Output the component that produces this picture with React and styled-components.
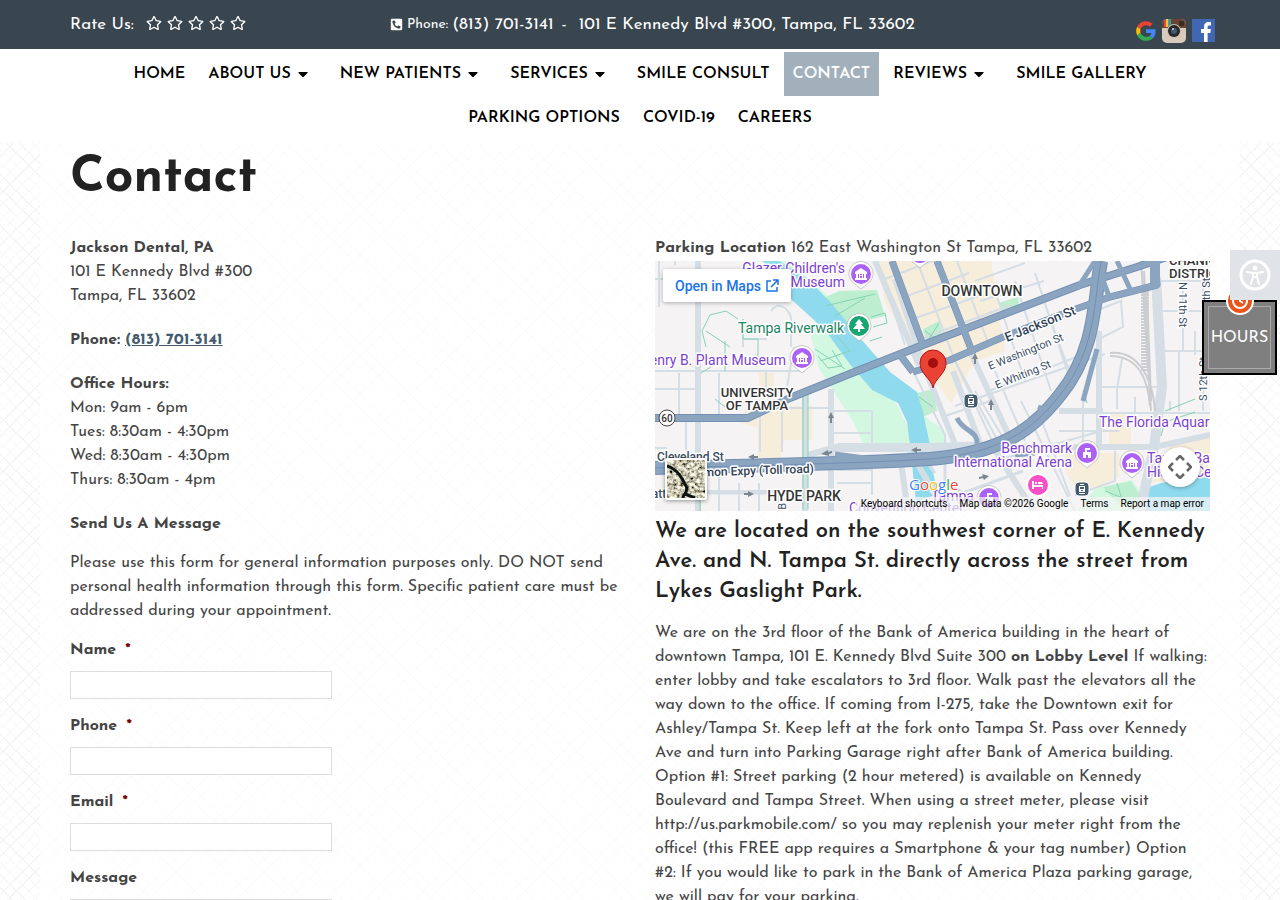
import React from 'react';
import styled, { createGlobalStyle } from 'styled-components';
import { FaRegStar, FaPhoneSquareAlt, FaCaretDown } from 'react-icons/fa';

const GlobalStyle = createGlobalStyle`
  *, *::before, *::after {
    box-sizing: border-box;
  }
  body {
    margin: 0;
    color: #444;
    font-family: 'Josefin Sans', Lato, sans-serif;
    font-size: 16px;
    line-height: 24px;
    background-color: #fff;
    background-image:
      repeating-linear-gradient(45deg, #f5f5f5 0 1px, transparent 1px 9px),
      repeating-linear-gradient(-45deg, #f5f5f5 0 1px, transparent 1px 9px);
  }
  h1, h2, h3, p, ul {
    margin: 0;
    padding: 0;
  }
  a {
    color: inherit;
    text-decoration: none;
  }
`;

const Container = styled.div`
  max-width: 1140px;
  margin: 0 auto;
`;

const TopBar = styled.header`
  background: #394650;
  color: #fff;
`;

const TopRow = styled(Container)`
  display: grid;
  grid-template-columns: 320px 1fr auto;
  align-items: center;
  height: 49px;
  font-size: 17px;
`;

const Rating = styled.div`
  display: flex;
  align-items: center;
  gap: 12px;
`;

const Stars = styled.span`
  display: flex;
  gap: 5px;
  font-size: 16px;
  margin-top: -3px;
`;

const TopContact = styled.div`
  display: flex;
  align-items: center;
  gap: 4px;
  white-space: nowrap;
  small {
    font-size: 14px;
  }
  span {
    padding: 0 8px 0 4px;
  }
`;

const Social = styled.div`
  display: flex;
  align-items: center;
  gap: 6px;
  padding: 12px 0 0;
  margin-right: -5px;
  a {
    display: flex;
  }
`;

const Nav = styled.nav`
  background: #fff;
  padding: 3px 0;
`;

const NavList = styled.ul`
  display: flex;
  flex-wrap: wrap;
  justify-content: center;
  column-gap: 5px;
  max-width: 1140px;
  margin: 0 auto;
  list-style: none;
`;

const NavLink = styled.a`
  display: flex;
  align-items: center;
  gap: 4px;
  height: 44px;
  padding: 0 9px;
  font-size: 16px;
  font-weight: 600;
  color: ${(props) => (props.$active ? '#fff' : '#000')};
  background: ${(props) => (props.$active ? '#a2b0bc' : 'transparent')};
  svg {
    margin-right: 6px;
  }
`;

const Main = styled.main`
  max-width: 1200px;
  margin: 0 auto;
  padding: 0 30px 60px;
  background: rgba(255, 255, 255, 0.7);
`;

const Title = styled.h1`
  padding: 6px 0 27px;
  font-size: 50px;
  line-height: 60px;
  color: #222;
`;

const Columns = styled.div`
  display: grid;
  grid-template-columns: 1fr 1fr;
  gap: 30px;
`;

const Info = styled.div`
  display: flex;
  flex-direction: column;
  gap: 20px;
`;

const PhoneLink = styled.a`
  font-weight: 700;
  color: #455b70;
  text-decoration: underline;
`;

const Form = styled.form`
  display: flex;
  flex-direction: column;
  gap: 15px;
`;

const Field = styled.div`
  display: flex;
  flex-direction: column;
  gap: 9px;
  label {
    font-weight: 700;
  }
  b {
    margin-left: 4px;
    color: #790000;
  }
  input,
  textarea {
    width: 262px;
    height: ${(props) => (props.$tall ? '120px' : '28px')};
    padding: 4px 6px;
    border: 1px solid #ddd;
    background: #fff;
    font: inherit;
  }
`;

const Lead = styled.h3`
  padding: 6px 0 14px;
  font-size: 22px;
  font-weight: 600;
  line-height: 30px;
  color: #222;
`;

const MapFrame = styled.div`
  position: relative;
  height: 250px;
  margin-top: 1px;
  overflow: hidden;
  background: #f5f3f4;
  font-family: Roboto, sans-serif;
  > svg {
    display: block;
    width: 100%;
    height: 250px;
  }
`;

const OpenInMaps = styled.a`
  position: absolute;
  top: 8px;
  left: 8px;
  display: flex;
  align-items: center;
  gap: 4px;
  height: 33px;
  padding: 0 12px;
  border-radius: 2px;
  background: #fff;
  box-shadow: 0 1px 4px rgba(0, 0, 0, 0.3);
  color: #1a73e8;
  font-size: 14px;
  font-weight: 500;
`;

const Satellite = styled.button`
  position: absolute;
  left: 10px;
  bottom: 11px;
  width: 42px;
  height: 42px;
  padding: 0;
  border: 2px solid #fff;
  border-radius: 2px;
  background: #5b5a48;
  box-shadow: 0 1px 4px rgba(0, 0, 0, 0.4);
  svg {
    display: block;
  }
`;

const CameraButton = styled.button`
  position: absolute;
  right: 10px;
  bottom: 24px;
  display: flex;
  align-items: center;
  justify-content: center;
  width: 40px;
  height: 40px;
  padding: 0;
  border: 0;
  border-radius: 50%;
  background: #fff;
  box-shadow: 0 1px 4px rgba(0, 0, 0, 0.3);
`;

const MapFooter = styled.div`
  position: absolute;
  right: 0;
  bottom: 0;
  display: flex;
  gap: 12px;
  height: 14px;
  padding: 0 6px;
  background: rgba(245, 245, 245, 0.7);
  color: #000;
  font-size: 10px;
  line-height: 14px;
  white-space: nowrap;
  button {
    padding: 0;
    border: 0;
    background: none;
    color: inherit;
    font: inherit;
  }
`;

const Accessibility = styled.button`
  position: fixed;
  top: 250px;
  right: 0;
  z-index: 2;
  display: flex;
  align-items: center;
  justify-content: center;
  width: 50px;
  height: 50px;
  padding: 0;
  border: 0;
  background: #e0e4e9;
`;

const Hours = styled.button`
  position: fixed;
  top: 300px;
  right: 3px;
  width: 75px;
  height: 75px;
  padding: 4px;
  border: 2px solid #000;
  background: #7f7f7f;
  color: #fff;
  font-family: inherit;
  font-size: 16px;
  span {
    display: flex;
    align-items: center;
    justify-content: center;
    height: 63px;
    border: 1px solid #aaa;
  }
  svg {
    position: absolute;
    top: -16px;
    left: 21px;
  }
`;

const navItems = [
  { label: 'HOME' },
  { label: 'ABOUT US', menu: true },
  { label: 'NEW PATIENTS', menu: true },
  { label: 'SERVICES', menu: true },
  { label: 'SMILE CONSULT' },
  { label: 'CONTACT', active: true },
  { label: 'REVIEWS', menu: true },
  { label: 'SMILE GALLERY' },
  { label: 'PARKING OPTIONS' },
  { label: 'COVID-19' },
  { label: 'CAREERS' },
];

const GoogleIcon = () => (
  <svg width="20" height="20" viewBox="0 0 48 48">
    <path fill="#ea4335" d="M24 10c3.500 0 6.600 1.200 9.100 3.600l6.800-6.800C35.800 3 30.400.500 24 .500 14.800.500 6.900 5.800 3 13.500l7.900 6.100C12.800 14 17.900 10 24 10z" />
    <path fill="#4285f4" d="M47 24.500c0-1.600-.2-3.100-.4-4.500H24v9h12.900c-.6 3-2.300 5.500-4.800 7.200l7.700 6C44.300 38 47 31.800 47 24.500z" />
    <path fill="#fbbc05" d="M10.900 28.400a14 14 0 0 1 0-8.800L3 13.500a23.500 23.500 0 0 0 0 21z" />
    <path fill="#34a853" d="M24 47.500c6.500 0 11.900-2.100 15.800-5.800l-7.700-6C30 37.200 27.200 38 24 38c-6.100 0-11.200-4-13.100-9.600L3 34.500C6.900 42.200 14.800 47.500 24 47.500z" />
  </svg>
);

const InstagramIcon = () => (
  <svg width="24" height="24" viewBox="0 0 24 24">
    <rect width="24" height="24" rx="5" fill="#d9cbbb" />
    <path d="M0 9V5a5 5 0 0 1 5-5h14a5 5 0 0 1 5 5v4z" fill="#6b4330" />
    <path d="M2 1h2v7H2z" fill="#e44b3c" />
    <path d="M4 0h2v8H4z" fill="#f0c63e" />
    <path d="M6 0h1v8H6z" fill="#56a84f" />
    <path d="M7 0h2v8H7z" fill="#3f8ccc" />
    <rect x="17" y="2" width="5" height="5" rx="1" fill="#3a2a24" />
    <circle cx="12" cy="12" r="7" fill="#c9bcae" />
    <circle cx="12" cy="12" r="6" fill="#26282c" />
    <circle cx="12" cy="12" r="3" fill="#435b6b" />
    <circle cx="11" cy="10" r="1" fill="#c3d3df" />
  </svg>
);

const FacebookIcon = () => (
  <svg width="23" height="23" viewBox="0 0 23 23">
    <rect width="23" height="23" fill="#4267b2" />
    <path fill="#fff" d="M12 23v-9H9v-4h3V7.500C12 4.500 13.800 3 16.400 3H19v3.500h-1.700c-1.400 0-1.700.7-1.700 1.600V10h3.300l-.5 4h-2.800v9z" />
  </svg>
);

const Museum = () => (
  <g fill="#fff">
    <path d="M-6-2 0-6 6-2v2H-6z" />
    <path d="M-5 0h2v4h-2zM3 0h2v4H3zM-6 4H6v2H-6zM-2 0h1v1h2V0h1v4H1V2h-2v2h-1z" />
  </g>
);

const Castle = () => (
  <path fill="#fff" d="M-4 5v-6h2v-4h5v2H0v2h4v6H1V2h-2v3z" />
);

const Tree = () => (
  <path fill="#fff" d="M0-7 4-2H2l4 5H1v3h-2V3h-5l4-5h-2z" />
);

const Poi = ({ x, y, color = '#ab60f6', children }) => (
  <g transform={`translate(${x} ${y})`}>
    <path
      d="M0 15 -6 10A12 12 0 1 1 6 10z"
      fill="#fff"
      stroke="#a9a9a9"
      strokeOpacity=".6"
    />
    <circle r="10" fill={color} />
    {children}
  </g>
);

const Transit = ({ x, y }) => (
  <g transform={`translate(${x} ${y})`}>
    <rect x="-7" y="-7" width="14" height="14" rx="4" fill="#455c6e" stroke="#fff" />
    <path d="M-3-3h6v6h-6zM-2-5h4v1h-4zM-3 4h6v1h-6z" fill="#fff" />
    <path d="M-2-2h4v2h-4zM-1 1h2v1h-2z" fill="#455c6e" />
  </g>
);

const MapLabel = styled.text`
  font-family: Roboto, sans-serif;
  font-size: ${(props) => props.$size || 14}px;
  font-weight: ${(props) => (props.$bold ? 500 : 400)};
  fill: ${(props) => props.$color || '#7d3fcf'};
  stroke: #fff;
  stroke-width: 3px;
  stroke-linejoin: round;
  paint-order: stroke;
`;

const TampaMap = () => (
  <svg viewBox="0 0 555 250" preserveAspectRatio="xMinYMin slice" role="img" aria-label="Map of downtown Tampa">
    {/* blocks, parks and water */}
    <path
      fill="#f7eddb"
      d="M224 0h112l14 90-30 10-24 42-28-40-38-60zM93 145h64v34h-28l-6 30h-20v-42l-20-6zM104 112h15v14h-15zM454 152h22v34h-22zM410 192h54v24l-20 12-26-4-8-16zM515 186l40-12v40l-60 8z"
    />
    <path
      fill="#d3f8e2"
      d="M110 0h20l40 32 36 42-10 10 46 60 12 24 1 20h-45l-10-24-28-44-8-12-8-32 6-24-50-50zM262 150l28 20 2 16h-18zM440 228l36-9 12 14-6 17h-60z"
    />
    <path fill="#bdeecf" d="M166 38l18-8 38-1 8 26-34 8-16-8zM268 68l16-8 4 16-16 6zM262 132l16-4 4 22-14 6zM343 42l20-6 2 14-16 4zM448 226l28-6 10 16-20 10z" />
    <path
      fill="#90daee"
      d="M108 0h16l28 17 26 27 27 33 30 34 27 20 6 20 7 33 2 23 6 26-22 8-6-57-3-23-9-19-26-13-23-27-24-33-33-30z"
    />
    <path fill="#90daee" d="M488 228l18-6 49-9v37h-73z" />
    {/* minor streets */}
    <g fill="none" stroke="#d5dde5" strokeWidth="2">
      <path d="M0 18h36M4 0v46M20 0v4M0 128h40M0 110h150M24 112v46M31 157v32M64 112v43M0 187h12M105 145v46M127 145v46M103 147h74M179 150h38M179 172h38M217 150v40M178 202v48M182 209h36M182 222h36M217 200v34M44 230h130M64 200v50M84 222v28M104 222v28M124 230v20M95 110h16v20" />
      <path d="M222 0l28 84M244 38l70-26M252 60l72-25M260 80l96-36M230 18l105-40M262 0l38 100 46 86M302 0l32 84M320 20l50-18M325 40l64-20M330 58l60-20M340 30l30 90M360 20l36 110M380 12l34 104M396 60l22 60M334 130l90-35M300 145l150-52M290 155l45-15M340 110l30 70M300 100l40 86M258 110l32 64v14M320 130l30 50" />
      <path d="M444 86v64M445 126h60M467 98l-5 30v20M480 136v30M404 152h150M428 138v48M404 170h60M350 197l100-28M366 140l54 110M385 155l30 80M440 50l26-10 2 26-24 12M505 50h50M510 90h45M515 140v10M528 20v70M540 70v24M524 90v60M548 20v130M505 152h50M460 190v30l-40 14M440 0v20M505 20h50" />
      <path d="M116 50c8-12 20 0 20 8v28M139 86l-7 40M88 58v28M88 78h24" />
    </g>
    <g fill="none" stroke="#d5dde5" strokeWidth="6">
      <path d="M43 0v250M150 132v118M176 128v122M0 0v0M172 188h180M240 18l30 90 32 80M298 110l28 75M242 0l-12-30M220 0l44 104M150 195l34-10h90l64-2M245 195l8 55M255 190l35 60M334 180l45 70M360 186h140l55-12M444 70v115M404 150h44M316 92l42 92" />
      <path d="M501 16l6 110-8 60-14 64" strokeWidth="10" />
      <path d="M290 185v35l18 12 60-22M0 232h174M260 186l20 26" strokeWidth="3" />
    </g>
    {/* footpaths */}
    <g fill="none" stroke="#84d3b3" strokeWidth="1">
      <path d="M51 86l-4-16 8-16 16-4 12 8M51 70l24 16M70 80v30M88 58v20h15v25M170 45l50-12M180 55l30-18M165 100l30-10-14-16M163 95l10 12 14-2-10-16M160 88l30 20M215 80l12-4M218 66l14-4-2-10-14 4M270 70l14 10M284 62l-10 16M264 136l14 10M46 112l10-6M60 138l10 8M45 230v20M148 130v118M153 130v118M450 230l30 12M462 222l6 20M510 150l30-12M506 175l4-14 30-10M428 130l4 12" />
    </g>
    {/* rail yard */}
    <g fill="none" stroke="#cbcdd0">
      <path d="M486 0l10 150M489 10l6 130M492 30l4 110M455 92c25-3 42 20 45 58M455 95c30 0 38 25 40 50" strokeWidth="2" />
      <path d="M490 30v80" strokeWidth="8" strokeDasharray="2 1" />
    </g>
    {/* highways */}
    <g fill="none" strokeLinejoin="round">
      <g stroke="#7390b4">
        <path d="M0 157h93l42-20 57-23 76-30 110-42 47-18 57-18 30-10" strokeWidth="8" />
        <path d="M258 111l37-12 53-23 70-27 37-13 47-12-2-26" strokeWidth="7" />
        <path d="M237 0l31 84M245 94l13 17M282 0l36 93" strokeWidth="7" />
        <path d="M0 207c80-2 190-4 275-9 70-6 102-28 130-64 36-44 34-94 41-134" strokeWidth="14" />
      </g>
      <g stroke="#8ba5c1">
        <path d="M0 157h93l42-20 57-23 76-30 110-42 47-18 57-18 30-10" strokeWidth="6" />
        <path d="M258 111l37-12 53-23 70-27 37-13 47-12-2-26" strokeWidth="6" />
        <path d="M237 0l31 84M245 94l13 17M282 0l36 93" strokeWidth="6" />
        <path d="M500 0v22" strokeWidth="10" />
        <path d="M0 207c80-2 190-4 275-9 70-6 102-28 130-64 36-44 34-94 41-134" strokeWidth="12" />
        <path d="M428 140l14-52M422 28l18-28M446 14l9 24M462 0l14 30M302 157c6 14 22 12 20 28M180 193l60 8M362 190l16-4M383 146l12 4M360 194l20-2" strokeWidth="5" />
      </g>
      <path d="M0 207c80-2 190-4 275-9 70-6 102-28 130-64 36-44 34-94 41-134" stroke="#7390b4" />
    </g>
    {/* one-way arrows */}
    <g fill="#7a858f">
      <path d="M93 196l6-3v2h4v2h-4v2zM99 233l-6-3v2h-4v2h4v2zM256 189l6-3v2h4v2h-4v2zM166 193l7-4v2l4-1v2l-3 1v2zM334 215l-7-2 1 2-4 1v2l4-1 1 2zM176 151l3 6h-2v5h-2v-5h-2zM320 92l3 6h-2v5h-2v-5h-2zM336 138l3 6h-2v5h-2v-5h-2z" />
    </g>
    <circle cx="12" cy="157" r="8" fill="#fff" stroke="#444" />
    <MapLabel x="12" y="161" $size={10} $bold $color="#333" textAnchor="middle">60</MapLabel>

    <MapLabel x="190" y="12" textAnchor="end">Glazer Children's</MapLabel>
    <MapLabel x="190" y="26" textAnchor="end">Museum</MapLabel>
    <MapLabel x="83" y="72" $color="#1c8562">Tampa Riverwalk</MapLabel>
    <MapLabel x="131" y="104" textAnchor="end">Henry B. Plant Museum</MapLabel>
    <MapLabel x="102" y="136" $size={13} $bold $color="#333" textAnchor="middle">UNIVERSITY</MapLabel>
    <MapLabel x="102" y="149" $size={13} $bold $color="#333" textAnchor="middle">OF TAMPA</MapLabel>
    <MapLabel x="327" y="35" $size={14} $bold $color="#333" textAnchor="middle">DOWNTOWN</MapLabel>
    <MapLabel x="149" y="240" $size={14} $bold $color="#333" textAnchor="middle">HYDE PARK</MapLabel>
    <MapLabel x="514" y="4" $size={13} $bold $color="#333">CHANNEL</MapLabel>
    <MapLabel x="514" y="17" $size={13} $bold $color="#333">DISTRICT</MapLabel>
    <MapLabel x="2" y="200" $size={12} $bold $color="#3c4f66">Cleveland St</MapLabel>
    <MapLabel x="32" y="216" $size={12} $bold $color="#2f4158" transform="rotate(-2 32 216)">Selmon Expy (Toll road)</MapLabel>
    <MapLabel x="-14" y="237" $size={12} $bold $color="#3c4f66">Platt</MapLabel>
    <MapLabel x="352" y="81" $size={13} $bold $color="#2f4158" transform="rotate(-22 352 81)">E Jackson St</MapLabel>
    <MapLabel x="335" y="109" $size={11} $color="#3c4f66" transform="rotate(-22 335 109)">E Washington St</MapLabel>
    <MapLabel x="342" y="128" $size={11} $color="#3c4f66" transform="rotate(-22 342 128)">E Whiting St</MapLabel>
    <MapLabel x="524" y="21" $size={11} $color="#3c4f66" transform="rotate(90 524 21)">N 11th St</MapLabel>
    <MapLabel x="552" y="140" $size={11} $color="#3c4f66" transform="rotate(-90 552 140)">S 12th St</MapLabel>
    <MapLabel x="555" y="62" $size={11} $color="#3c4f66" transform="rotate(-90 555 62)">N 12th St</MapLabel>
    <MapLabel x="131" y="258" $size={11} $color="#3c4f66" transform="rotate(-90 131 258)">S B</MapLabel>
    <MapLabel x="444" y="166">The Florida Aquarium</MapLabel>
    <MapLabel x="417" y="192" textAnchor="end">Benchmark</MapLabel>
    <MapLabel x="417" y="206" textAnchor="end">International Arena</MapLabel>
    <MapLabel x="492" y="202">Tampa Bay</MapLabel>
    <MapLabel x="492" y="216">History Center</MapLabel>
    <MapLabel x="276" y="240">Tampa</MapLabel>
    <MapLabel x="194" y="252">Convention Center</MapLabel>

    <Poi x={265} y={-8} />
    <Poi x={206} y={13}><Museum /></Poi>
    <Poi x={147} y={97}><Museum /></Poi>
    <Poi x={204} y={65} color="#18a572"><Tree /></Poi>
    <Poi x={432} y={192}><Castle /></Poi>
    <Poi x={477} y={202}><Museum /></Poi>
    <Poi x={334} y={237}><Castle /></Poi>
    <g transform="translate(383 224)">
      <circle r="11" fill="#f94fc9" stroke="#fff" strokeWidth="2" />
      <path d="M-6-4h2v4h9v4H4V2h-8v2h-2zM-3-3h2v2h-2zM0-3h4l1 2H0z" fill="#fff" />
    </g>
    <Transit x={316} y={140} />
    <Transit x={427} y={228} />

    <path
      d="M278 127c-2-10-13-14-13-25a13 13 0 0 1 26 0c0 11-11 15-13 25z"
      fill="#ea4335"
      stroke="#b31412"
      strokeWidth="1"
    />
    <circle cx="278" cy="102" r="5" fill="#a50e0e" />

    <text x="254" y="229" fontFamily="Open Sans, sans-serif" fontSize="15" stroke="#fff" strokeWidth="2" paintOrder="stroke">
      <tspan fill="#4285f4">G</tspan>
      <tspan fill="#ea4335">o</tspan>
      <tspan fill="#fbbc05">o</tspan>
      <tspan fill="#4285f4">g</tspan>
      <tspan fill="#34a853">l</tspan>
      <tspan fill="#ea4335">e</tspan>
    </text>
  </svg>
);

const SatelliteThumb = () => (
  <svg width="38" height="38" viewBox="0 0 38 38" aria-hidden="true">
    <filter id="terrain">
      <feTurbulence type="fractalNoise" baseFrequency=".3" numOctaves="3" seed="8" />
      <feColorMatrix values="2 0 0 0 -.4 2 0 0 0 -.42 1.800 0 0 0 -.44 0 0 0 0 1" />
    </filter>
    <rect width="38" height="38" filter="url(#terrain)" />
    <path d="M0 6c12 4 16 14 19 20s-3 8-3 12M18 34l10 4" fill="none" stroke="#0c1413" strokeWidth="3" />
  </svg>
);

const RequiredField = ({ id, label, type = 'text' }) => (
  <Field>
    <label htmlFor={id}>
      {label} <b>*</b>
    </label>
    <input id={id} type={type} />
  </Field>
);

export default function App() {
  return (
    <>
      <GlobalStyle />
      <TopBar>
        <TopRow>
          <Rating>
            Rate Us:
            <Stars>
              {[1, 2, 3, 4, 5].map((n) => (
                <FaRegStar key={n} />
              ))}
            </Stars>
          </Rating>
          <TopContact>
            <FaPhoneSquareAlt size={13} />
            <small>Phone:</small>
            <a href="tel:8137013141">(813) 701-3141</a>
            <span>-</span>
            <a href="#directions">101 E Kennedy Blvd #300, Tampa, FL 33602</a>
          </TopContact>
          <Social>
            <a href="#google" aria-label="Google"><GoogleIcon /></a>
            <a href="#instagram" aria-label="Instagram"><InstagramIcon /></a>
            <a href="#facebook" aria-label="Facebook"><FacebookIcon /></a>
          </Social>
        </TopRow>
      </TopBar>

      <Nav>
        <NavList>
          {navItems.map((item) => (
            <li key={item.label}>
              <NavLink href="#nav" $active={item.active}>
                {item.label}
                {item.menu && <FaCaretDown />}
              </NavLink>
            </li>
          ))}
        </NavList>
      </Nav>

      <Main>
        <Title>Contact</Title>
        <Columns>
          <Info>
            <p>
              <strong>Jackson Dental, PA</strong>
              <br />
              101 E Kennedy Blvd #300
              <br />
              Tampa, FL 33602
            </p>
            <p>
              <strong>Phone:</strong> <PhoneLink href="tel:8137013141">(813) 701-3141</PhoneLink>
            </p>
            <p>
              <strong>Office Hours:</strong>
              <br />
              Mon: 9am - 6pm
              <br />
              Tues: 8:30am - 4:30pm
              <br />
              Wed: 8:30am - 4:30pm
              <br />
              Thurs: 8:30am - 4pm
            </p>
            <Form>
              <strong>Send Us A Message</strong>
              <p>
                Please use this form for general information purposes only. DO NOT send personal
                health information through this form. Specific patient care must be addressed during
                your appointment.
              </p>
              <RequiredField id="name" label="Name" />
              <RequiredField id="phone" label="Phone" type="tel" />
              <RequiredField id="email" label="Email" type="email" />
              <Field $tall>
                <label htmlFor="message">Message</label>
                <textarea id="message" />
              </Field>
            </Form>
          </Info>

          <div>
            <p>
              <strong>Parking Location</strong> 162 East Washington St Tampa, FL 33602
            </p>
            <MapFrame>
              <TampaMap />
              <OpenInMaps href="#maps">
                Open in Maps
                <svg width="14" height="14" viewBox="0 0 14 14" fill="none" stroke="#1a73e8" strokeWidth="1.500">
                  <path d="M6 2H2v10h10V8M8 1h5v5M13 1 6 8" />
                </svg>
              </OpenInMaps>
              <Satellite aria-label="Show satellite imagery"><SatelliteThumb /></Satellite>
              <CameraButton aria-label="Map camera controls">
                <svg width="24" height="24" viewBox="0 0 24 24" fill="none" stroke="#666" strokeWidth="2.500">
                  <path d="M8 5l4-4 4 4M8 19l4 4 4-4M5 8l-4 4 4 4M19 8l4 4-4 4" />
                </svg>
              </CameraButton>
              <MapFooter>
                <button type="button">Keyboard shortcuts</button>
                <span>Map data ©2026 Google</span>
                <a href="#terms">Terms</a>
                <a href="#report">Report a map error</a>
              </MapFooter>
            </MapFrame>
            <Lead>
              We are located on the southwest corner of E. Kennedy Ave. and N. Tampa St. directly
              across the street from Lykes Gaslight Park.
            </Lead>
            <p>
              We are on the 3rd floor of the Bank of America building in the heart of downtown
              Tampa, 101 E. Kennedy Blvd Suite 300 <strong>on Lobby Level</strong> If walking: enter
              lobby and take escalators to 3rd floor. Walk past the elevators all the way down to
              the office. If coming from I-275, take the Downtown exit for Ashley/Tampa St. Keep
              left at the fork onto Tampa St. Pass over Kennedy Ave and turn into Parking Garage
              right after Bank of America building. Option #1: Street parking (2 hour metered) is
              available on Kennedy Boulevard and Tampa Street. When using a street meter, please
              visit http://us.parkmobile.com/ so you may replenish your meter right from the
              office! (this FREE app requires a Smartphone &amp; your tag number) Option #2: If you
              would like to park in the Bank of America Plaza parking garage, we will pay for your
              parking.
            </p>
          </div>
        </Columns>
      </Main>

      <Accessibility aria-label="Accessibility options">
        <svg width="32" height="32" viewBox="0 0 32 32" fill="none" stroke="#fff">
          <circle cx="16" cy="16" r="14" strokeWidth="3" />
          <circle cx="16" cy="9" r="2" fill="#fff" />
          <path d="M8 13l6 1v4l-2 7M24 13l-6 1v4l2 7M14 14h4M14 18h4" strokeWidth="2" strokeLinecap="round" />
        </svg>
      </Accessibility>
      <Hours>
        <span>HOURS</span>
        <svg width="30" height="30" viewBox="0 0 30 30" fill="none">
          <circle cx="15" cy="15" r="13" fill="#e8541a" stroke="#fff" strokeWidth="2" />
          <circle cx="15" cy="15" r="7" stroke="#fff" strokeWidth="2" />
          <path d="M15 11v4l3 2" stroke="#fff" strokeWidth="2" />
        </svg>
      </Hours>
    </>
  );
}
